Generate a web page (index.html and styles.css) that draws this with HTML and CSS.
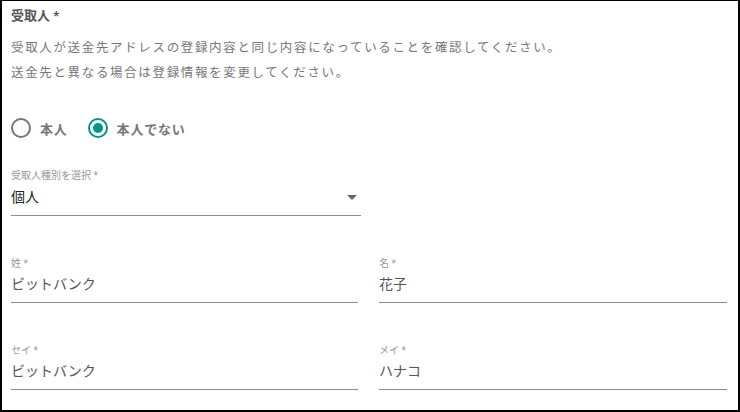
FILE: index.html
```html
<!DOCTYPE html>
<html lang="ja">
<head>
    <meta charset="UTF-8">
    <title>受取人</title>
    <link rel="stylesheet" href="styles.css">
</head>
<body>
    <div class="frame">
        <h3 class="title">受取人 *</h3>
        <div class="desc">
            <p>受取人が送金先アドレスの登録内容と同じ内容になっていることを確認してください。</p>
            <p>送金先と異なる場合は登録情報を変更してください。</p>
        </div>

        <div class="radios">
            <label class="radio"><span class="dot"></span>本人</label>
            <label class="radio checked"><span class="dot"></span>本人でない</label>
        </div>

        <div class="field select">
            <div class="label">受取人種別を選択 *</div>
            <div class="value dark">個人<span class="arrow"></span></div>
        </div>

        <div class="row">
            <div class="field">
                <div class="label">姓 *</div>
                <div class="value">ビットバンク</div>
            </div>
            <div class="field">
                <div class="label">名 *</div>
                <div class="value">花子</div>
            </div>
        </div>

        <div class="row">
            <div class="field">
                <div class="label">セイ *</div>
                <div class="value">ビットバンク</div>
            </div>
            <div class="field">
                <div class="label">メイ *</div>
                <div class="value">ハナコ</div>
            </div>
        </div>
    </div>
</body>
</html>
```

FILE: styles.css
```css
html, body {
    margin: 0;
    padding: 0;
    background: #fff;
}
body {
    font-family: Roboto, "Noto Sans CJK JP", sans-serif;
    color: #555;
}
.frame {
    box-sizing: border-box;
    width: 740px;
    height: 412px;
    border: 2px solid #000;
    border-top-width: 1px;
    padding: 5px 11px 0 9px;
    overflow: hidden;
}
.title {
    margin: 0;
    font-size: 13px;
    line-height: 20px;
    font-weight: bold;
    color: #555;
}
.desc {
    margin-top: 9px;
}
.desc p {
    margin: 0;
    font-size: 12.5px;
    letter-spacing: 1.65px;
    line-height: 25px;
    color: #777;
}
.radios {
    display: flex;
    gap: 20px;
    margin-top: 33px;
    height: 20px;
}
.radio {
    display: flex;
    align-items: center;
    gap: 9px;
    font-size: 13px;
    letter-spacing: 0.8px;
    font-weight: bold;
    color: #777;
}
.dot {
    box-sizing: border-box;
    width: 20px;
    height: 20px;
    border: 2px solid #757575;
    border-radius: 50%;
    display: flex;
    align-items: center;
    justify-content: center;
}
.checked .dot {
    border-color: #009688;
}
.checked .dot::after {
    content: "";
    width: 10px;
    height: 10px;
    border-radius: 50%;
    background: #009688;
}
.field {
    border-bottom: 1px solid #8c8c8c;
}
.select {
    width: 350px;
    margin-top: 31px;
}
.label {
    font-size: 10px;
    line-height: 14px;
    color: #999;
}
.value {
    position: relative;
    margin-top: 3px;
    padding-bottom: 7px;
    font-size: 14px;
    line-height: 22px;
    color: #555;
}
.value.dark {
    color: #222;
}
.arrow {
    position: absolute;
    right: 4px;
    top: 9px;
    border-left: 5px solid transparent;
    border-right: 5px solid transparent;
    border-top: 5px solid #666;
}
.row {
    display: grid;
    grid-template-columns: 347px 348px;
    column-gap: 21px;
    margin-top: 41px;
}
.row + .row {
    margin-top: 41px;
}
.row .value {
    margin-top: 2px;
    padding-bottom: 7px;
}
```
